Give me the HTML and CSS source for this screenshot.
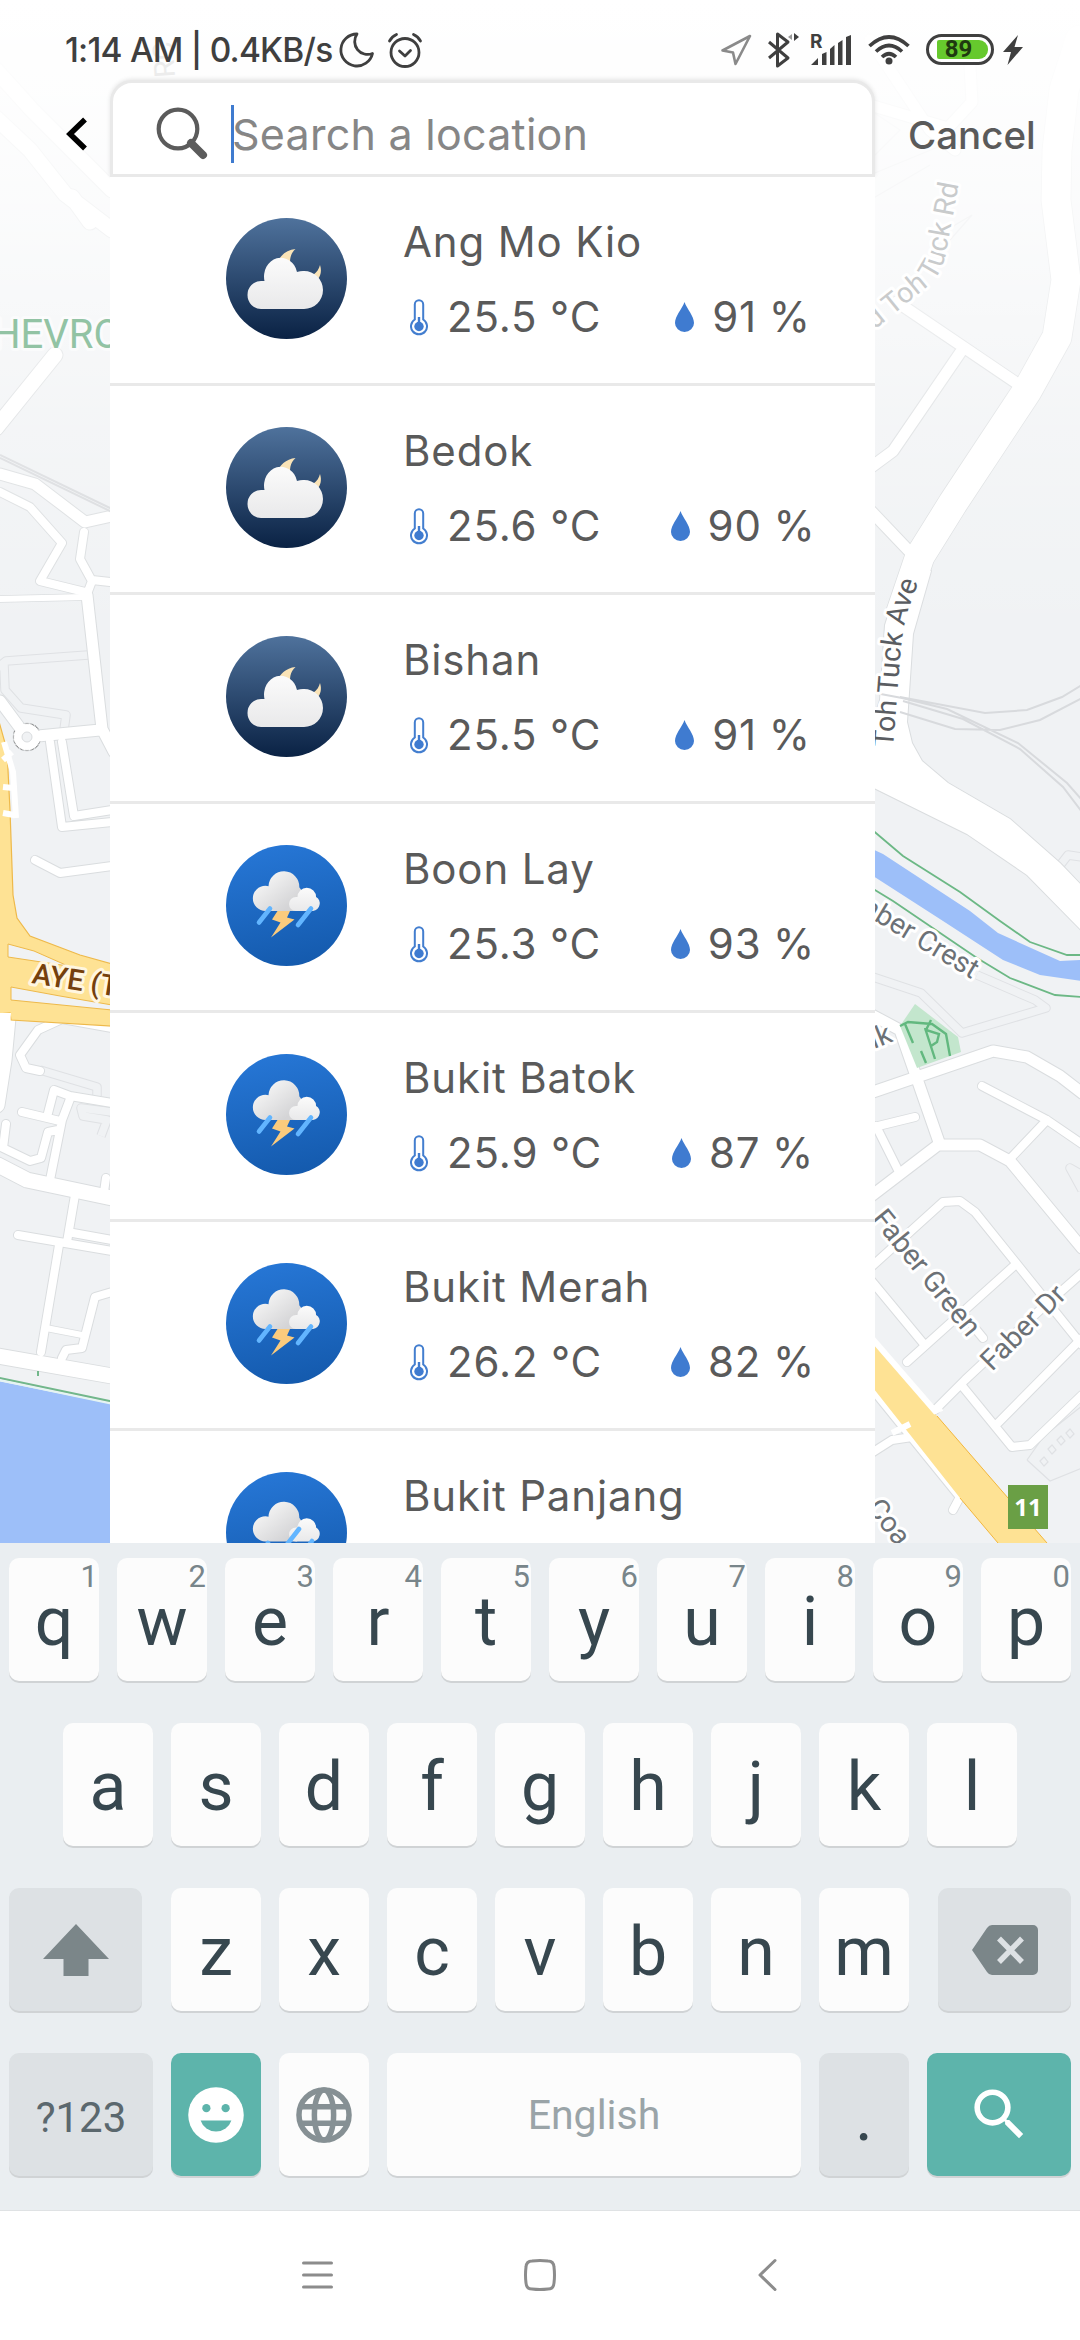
FILE: index.html
```html
<!DOCTYPE html>
<html lang="en">
<head>
<meta charset="utf-8">
<title>Search a location</title>
<link rel="stylesheet" href="styles.css">
</head>
<body>
<svg class="defs" width="0" height="0" aria-hidden="true">
  <defs>
    <linearGradient id="night" x1="0" y1="0" x2="0" y2="1"><stop offset="0" stop-color="#4f729c"/><stop offset="1" stop-color="#0a2244"/></linearGradient>
    <linearGradient id="day" x1="0.4" y1="0" x2="0.6" y2="1"><stop offset="0" stop-color="#2676d5"/><stop offset="1" stop-color="#145aad"/></linearGradient>
    <linearGradient id="cloud" x1="0" y1="0" x2="0" y2="1"><stop offset="0" stop-color="#fbfbfb"/><stop offset="1" stop-color="#e9e9ea"/></linearGradient>
    <linearGradient id="cloudDark" x1="0" y1="0" x2="1" y2="1"><stop offset="0.2" stop-color="#f4f4f4"/><stop offset="0.8" stop-color="#d4d4d6"/></linearGradient>
    <symbol id="w-night" viewBox="0 0 121 121">
      <circle cx="60.500" cy="60.500" r="60.500" fill="url(#night)"/>
      <path d="M51 47C53 38 60 32 69.500 31C64 36 63 43 65 50ZM87 57C91 54 93 51 94 47C96 53 94.500 58 92 61Z" fill="#f9e3b7"/>
      <path d="M35 91a13.500 14 0 0 1 0-28h3.500a16.500 18.500 0 0 1 32.500-9a19 19 0 0 1 7-1a19 19 0 0 1 0 38Z" fill="url(#cloud)"/>
    </symbol>
    <g id="clouds">
      <path d="M39.500 66a12.500 12.500 0 0 1 0-25.300q1.700 0 3 .5a15.400 15.400 0 0 1 30.800 1q5 6 4 12L71 66Z" fill="url(#cloudDark)"/>
      <path d="M70 66a7 7 0 0 1 0-14h1.500a9.300 9.300 0 0 1 18.600 0a7.600 7.600 0 0 1-3.100 14Z" fill="url(#cloud)"/>
    </g>
    <symbol id="w-storm" viewBox="0 0 121 121">
      <circle cx="60.500" cy="60.500" r="60.500" fill="url(#day)"/>
      <use href="#clouds"/>
      <path d="M44 63.500L33 77.500M85 63.500L72 80" stroke="#62b5ff" stroke-width="4.600" stroke-linecap="round"/>
      <path d="M51.500 66H64L61 72.500L68.500 74.500L45 92.500L54.500 77.500L46 74.500Z" fill="#fbcb7d"/>
    </symbol>
    <symbol id="w-rain" viewBox="0 0 121 121">
      <circle cx="60.500" cy="60.500" r="60.500" fill="url(#day)"/>
      <use href="#clouds" y="3.500"/>
      <path d="M73 57L59 75M86 69L75 84M42 71L32 85" stroke="#62b5ff" stroke-width="4.600" stroke-linecap="round"/>
    </symbol>
    <symbol id="thermo" viewBox="0 0 18 37">
      <path d="M4.800 20.500V5.500a4.200 4.200 0 0 1 8.400 0V20.500a8 8 0 1 1-8.400 0Z" fill="none" stroke="#437ecf" stroke-width="2"/>
      <path d="M9 18v9" stroke="#3f7bd0" stroke-width="2.400"/><circle cx="9" cy="27.500" r="4.700" fill="#3f7bd0"/>
    </symbol>
    <symbol id="drop" viewBox="0 0 19 30"><path d="M9.500 0C12 7 19 14 19 21a9.500 9 0 0 1-19 0C0 14 7 7 9.500 0Z" fill="#3f7bd0"/></symbol>
  </defs>
</svg>

<main class="screen">
  <svg class="map" viewBox="0 0 1080 1543" width="1080" height="1543">
    <defs>
      <linearGradient id="fade" x1="0" y1="0" x2="0" y2="1"><stop offset="0" stop-color="#fff"/><stop offset="0.15" stop-color="#fff" stop-opacity="0.9"/><stop offset="0.35" stop-color="#fff" stop-opacity="0.7"/><stop offset="0.65" stop-color="#fff" stop-opacity="0.28"/><stop offset="1" stop-color="#fff" stop-opacity="0"/></linearGradient>
      <g id="w6" fill="none"><path d="M0 599L85 597M46 1328L82 1335"/></g>
      <g id="w8" fill="none">
        <path d="M0 492L30 507L62 543L40 581L85 592M92 580L110 582M84 532L80 559L92 581L87 594"/>
        <path d="M50 742L62 827L112 822M62 742L74 816L112 810M35 860L60 873L112 866"/>
        <path d="M112 1028L62 1019L38 1030L20 1055L26 1068L40 1071M22 1112L60 1121M112 1103L70 1096L54 1090L47 1117M70 1099L62 1120L50 1180M6 1124L3 1148L30 1161L41 1158L48 1132L58 1130"/>
        <path d="M75 1195L67 1242M18 1235L112 1251M73 1233L112 1240M59 1245L41 1352M112 1292L95 1297L82 1348L66 1350L62 1358M106 1178L104 1192"/>
        <path d="M982 1086L1047 1120L1082 1144M870 1128L915 1117M876 1126L899 1172M1047 1120L1008 1161M870 1268L943 1202L960 1201L975 1212L1082 1345M1015 1265L907 1362M870 1279L923 1343M1082 1273L1040 1310L965 1380L935 1410M963 1387L1012 1447L1030 1445L1082 1395M998 1423L1082 1338M983 1338L960 1310"/>
        <path d="M870 1386L960 1497L953 1510M870 1454L892 1440L912 1437"/>
      </g>
      <g id="w11" fill="none">
        <path d="M87 595L102 729L114 752M0 701L20 728M38 736L100 730M0 474L35 484L85 522L112 516"/>
        <path d="M897 302L1018 384M960 353L893 451L870 468M870 510L910 552"/>
        <path d="M870 1093L993 1051L1027 1057L1060 1076L1082 1093M870 1014L900 1030L940 1145M870 1197L938 1145L980 1145L1010 1161L1082 1248"/>
        <path d="M870 105L948 128L972 102L970 66M870 40L930 130L955 150"/>
      </g>
      <g id="w15" fill="none">
        <path d="M55 355L-4 428M-2 1165L27 1180L112 1198M-2 1356L112 1376M8 1018L4 1060L-3 1105"/>
        <path d="M-4 118L30 150L65 194L112 230M-4 70L32 110L112 190M72 197L90 222"/>
      </g>
      <path id="expr" d="M906 560L885 625L880 700L870 730V786L967 834L1027 875L1084 933V888L1060 863L1010 819L948 783L922 761L912 743L907 722L913 634L931 571Z"/>
      <path id="avenue" d="M1080 40L1064 90L1057 150L1056 200L1066 280L1057 337L1027 391L953 503L920 556L901 612" fill="none"/>
      <path id="tohRd" d="M851 343L879 326L933 282Q944 268 947 248L965 150"/>
      <path id="tohAve" d="M893 748L900 660Q902 630 909 608L930 550"/>
    </defs>
    <rect width="1080" height="1543" fill="#f0f2f4"/>
    <g fill="none" stroke="#dfe1e4" stroke-width="9.500" stroke-linejoin="round"><path d="M-3 668L6 661L88 655M4 665L5 690L21 708L66 715L64 730M40 1070L97 1087L97 1096M112 1112L81 1108L83 1116L107 1120L101 1136M870 976L921 993L962 1033L1046 1008L1035 1000L977 975M1082 857L1068 855L1058 868M1082 1175L1070 1168L1082 1190"/></g>
    <g fill="none" stroke="#f0f2f4" stroke-width="7.500" stroke-linejoin="round"><path d="M-3 668L6 661L88 655M4 665L5 690L21 708L66 715L64 730M40 1070L97 1087L97 1096M112 1112L81 1108L83 1116L107 1120L101 1136M870 976L921 993L962 1033L1046 1008L1035 1000L977 975M1082 857L1068 855L1058 868M1082 1175L1070 1168L1082 1190"/></g>
    <g fill="none" stroke="#dfe1e4" stroke-width="1.200"><path d="M1027 1460L1044 1436L1082 1406M1027 1460L1050 1481L1082 1468M1040 1461l4-4l4 5l-4 4ZM1048 1449l4-4l4 5l-4 4ZM1057 1440l4-4l4 5l-4 4ZM1066 1433l4-4l4 5l-4 4ZM870 175L955 140M870 200L930 165M870 110L900 130L870 160M940 240L955 225L972 215L950 240"/></g>
    <g stroke="#dadddf" stroke-linecap="round" stroke-linejoin="round">
      <use href="#w6" stroke-width="7.500"/><use href="#w8" stroke-width="10"/><use href="#w11" stroke-width="13"/><use href="#w15" stroke-width="17"/>
      <use href="#avenue" stroke-width="30.500"/><use href="#expr" stroke-width="2"/><circle cx="27" cy="737" r="14"/>
    </g>
    <g stroke="#fff" stroke-linecap="round" stroke-linejoin="round">
      <use href="#w6" stroke-width="6"/><use href="#w8" stroke-width="8"/><use href="#w11" stroke-width="11"/><use href="#w15" stroke-width="15"/>
      <use href="#avenue" stroke-width="29"/><use href="#expr" fill="#fff" stroke="none"/><circle cx="27" cy="737" r="13" fill="#fff"/>
    </g>
    <circle cx="27" cy="737" r="5" fill="#f0f2f4" stroke="#dadddf"/>
    <g fill="none" stroke="#d8dadd" stroke-width="2"><path d="M900 697L985 713L1027 710L1062 697L1082 685M900 712L955 729L1000 730L1040 720L1082 698M902 698L947 709L1018 743L1067 783L1082 800M903 701L963 719L1020 749L1063 787L1082 812M870 692L902 698M0 455L112 509M0 458L112 512"/></g>
    <path d="M-2 718L7 750L10 810L13 895L17 918L30 936L80 955L112 964V1026L11 1020L10 1013L-2 1014Z" fill="#fee294" stroke="#eeb94a" stroke-width="1.200"/>
    <path d="M8 944L34 951L68 966L8 957ZM11 987L60 996L112 1005V1010L11 1000Z" fill="#f0f2f4" stroke="#eeb94a"/>
    <path d="M4 742L13 772L16 818M3 760L12 752M3 787L13 788M3 813L14 815" fill="none" stroke="#fff" stroke-width="6"/>
    <path d="M-2 1013L11 1013L9 1040L-2 1040Z" fill="#fff"/>
    <path d="M870 848L883 854L970 911L998 933L1060 961L1082 960V981L1040 975L1003 960L943 921L870 874Z" fill="#9dbff9"/>
    <path d="M870 828L903 856L960 892L1000 921L1030 942L1067 955L1082 955M870 887L893 901L977 958L1010 978L1055 995L1082 997" fill="none" stroke="#6cb885" stroke-width="1.800"/>
    <path d="M915 1004L958 1037L961 1052L917 1068L900 1026Z" fill="#c3e6cd"/>
    <path d="M900 1026L908 1022L932 1024L946 1034L950 1056M905 1024L913 1043M925 1028L935 1059M931 1020L926 1030L939 1034L937 1042L931 1046M921 1051L926 1063" fill="none" stroke="#62b87f" stroke-width="2.400"/>
    <path d="M870 1338L937 1416L1047 1543H998L960 1498L870 1384Z" fill="#fee294"/>
    <path d="M937 1416L1047 1543M998 1543L960 1498" stroke="#f2b63c"/>
    <path d="M870 1336L935 1411L942 1408M892 1433L910 1424" fill="none" stroke="#fff" stroke-width="6"/>
    <path d="M-2 1381L112 1404V1543H-2Z" fill="#9dbff9"/><path d="M-2 1377.500L112 1401.500M38 1371V1376" stroke="#72b78b" stroke-width="2"/><path d="M-2 1380L112 1404" stroke="#e4f4f2" stroke-width="1.600"/>
    <rect width="1080" height="640" fill="url(#fade)"/>
    <g class="road-label">
      <text class="faint-label"><textPath href="#tohRd">Old Toh Tuck Rd</textPath></text>
      <text class="dark-label"><textPath href="#tohAve">Toh Tuck Ave</textPath></text>
      <text transform="translate(860 912) rotate(31)">aber Crest</text>
      <text transform="translate(874 1049) rotate(-22)">lk</text>
      <text transform="translate(871 1219) rotate(51)">Faber Green</text>
      <text transform="translate(992 1372) rotate(-45)">Faber Dr</text>
      <text transform="translate(866 1508) rotate(52)">Coa</text>
      <text class="highway-label" transform="translate(31 983) rotate(9)">AYE (T</text>
      <text class="place-label" x="-8" y="348">HEVRO</text>
      <text class="ghost-label" transform="translate(175 77) rotate(-94)">RC</text>
    </g>
    <rect x="1008" y="1485" width="40" height="44" fill="#6a9f45"/>
    <text class="exit-label" x="1028" y="1516" text-anchor="middle">11</text>
  </svg>

  <header class="status">
    <span class="clock">1:14 AM | 0.4KB/s</span>
    <svg class="moon" width="34" height="36" viewBox="0 0 34 36"><path d="M17 2A16 16 0 1 0 32.500 21.500A13 13 0 0 1 17 2Z" fill="none" stroke="#3f3f3f" stroke-width="2.800" stroke-linejoin="round"/></svg>
    <svg class="alarm" width="34" height="36" viewBox="0 0 34 36" fill="none" stroke="#3f3f3f" stroke-width="2.800" stroke-linecap="round" stroke-linejoin="round"><circle cx="17" cy="20.500" r="14"/><path d="M11.500 19L17 24L22.500 18.500M1.500 9Q4 4.500 8.500 2.500M32.500 9Q30 4.500 25.500 2.500"/></svg>
    <span class="spring"></span>
    <svg width="31" height="32" viewBox="0 0 31 32"><path d="M29 2L14.500 30L12 18.500L1.500 16.500Z" fill="none" stroke="#8a8a8a" stroke-width="2.600" stroke-linejoin="round"/></svg>
    <svg class="bt" width="31" height="36" viewBox="0 0 31 36"><path d="M1 10L20 26L9.500 34V2L20 10L1 26" fill="none" stroke="#3f3f3f" stroke-width="3" stroke-linejoin="round"/><path d="M26 1V9L31 5Z" fill="#3f3f3f"/><path d="M24 2V8L20 5Z" fill="#999"/></svg>
    <svg class="signal" width="42" height="32" viewBox="0 0 42 32"><path d="M1 31L8 24V31ZM12 20L16.500 18V31H12ZM20 15L24.500 11V31H20ZM28 9L32.500 6V31H28ZM36 3L41 1V31H36Z" fill="#3f3f3f"/><text x="0" y="14" class="roam">R</text></svg>
    <svg class="wifi" width="42" height="30" viewBox="0 0 42 30"><path d="M1.500 11Q21-7 40.500 11M8 16.500Q21 4.500 34 16.500M14 22Q21 15.500 28 22" fill="none" stroke="#3f3f3f" stroke-width="3.700"/><circle cx="21" cy="26" r="3.500" fill="#3f3f3f"/></svg>
    <span class="battery"><span class="charge">89</span></span>
    <svg width="20" height="30" viewBox="0 0 20 30"><path d="M15 0L0 17H8L4.500 30L20 12H11.500Z" fill="#3f3f3f"/></svg>
  </header>

  <section class="topbar">
    <svg class="back" width="22" height="34" viewBox="0 0 22 34"><path d="M19 2.500L4 17L19 31.500" fill="none" stroke="#000" stroke-width="5.500"/></svg>
    <div class="searchbox">
      <svg width="52" height="54" viewBox="0 0 52 54"><circle cx="22" cy="22" r="19.300" fill="none" stroke="#5b5b5b" stroke-width="4.200"/><path d="M35 36L47 48" stroke="#5b5b5b" stroke-width="8" stroke-linecap="round"/></svg>
      <span class="caret"></span><span class="placeholder">Search a location</span>
    </div>
    <span class="cancel">Cancel</span>
  </section>

  <ul class="results">
    <li class="row"><svg class="weather"><use href="#w-night"/></svg><div class="info"><div class="name">Ang Mo Kio</div><div class="meta"><span class="temp"><svg class="thermo"><use href="#thermo"/></svg>25.5 °C</span><span class="hum"><svg class="drop"><use href="#drop"/></svg>91 %</span></div></div></li>
    <li class="row"><svg class="weather"><use href="#w-night"/></svg><div class="info"><div class="name">Bedok</div><div class="meta"><span class="temp"><svg class="thermo"><use href="#thermo"/></svg>25.6 °C</span><span class="hum"><svg class="drop"><use href="#drop"/></svg>90 %</span></div></div></li>
    <li class="row"><svg class="weather"><use href="#w-night"/></svg><div class="info"><div class="name">Bishan</div><div class="meta"><span class="temp"><svg class="thermo"><use href="#thermo"/></svg>25.5 °C</span><span class="hum"><svg class="drop"><use href="#drop"/></svg>91 %</span></div></div></li>
    <li class="row"><svg class="weather"><use href="#w-storm"/></svg><div class="info"><div class="name">Boon Lay</div><div class="meta"><span class="temp"><svg class="thermo"><use href="#thermo"/></svg>25.3 °C</span><span class="hum"><svg class="drop"><use href="#drop"/></svg>93 %</span></div></div></li>
    <li class="row"><svg class="weather"><use href="#w-storm"/></svg><div class="info"><div class="name">Bukit Batok</div><div class="meta"><span class="temp"><svg class="thermo"><use href="#thermo"/></svg>25.9 °C</span><span class="hum"><svg class="drop"><use href="#drop"/></svg>87 %</span></div></div></li>
    <li class="row"><svg class="weather"><use href="#w-storm"/></svg><div class="info"><div class="name">Bukit Merah</div><div class="meta"><span class="temp"><svg class="thermo"><use href="#thermo"/></svg>26.2 °C</span><span class="hum"><svg class="drop"><use href="#drop"/></svg>82 %</span></div></div></li>
    <li class="row"><svg class="weather"><use href="#w-rain"/></svg><div class="info"><div class="name">Bukit Panjang</div></div></li>
  </ul>

  <section class="keyboard">
    <div class="keys">
      <span class="key">q<sup>1</sup></span><span class="key">w<sup>2</sup></span><span class="key">e<sup>3</sup></span><span class="key">r<sup>4</sup></span><span class="key">t<sup>5</sup></span><span class="key">y<sup>6</sup></span><span class="key">u<sup>7</sup></span><span class="key">i<sup>8</sup></span><span class="key">o<sup>9</sup></span><span class="key">p<sup>0</sup></span>
    </div>
    <div class="keys">
      <span class="key">a</span><span class="key">s</span><span class="key">d</span><span class="key">f</span><span class="key">g</span><span class="key">h</span><span class="key">j</span><span class="key">k</span><span class="key">l</span>
    </div>
    <div class="keys">
      <span class="key func shift"><svg width="66" height="52" viewBox="0 0 66 52"><path d="M33 0L66 35H45.500V52H20.500V35H0Z" fill="#7b8689"/></svg></span>
      <span class="key">z</span><span class="key">x</span><span class="key">c</span><span class="key">v</span><span class="key">b</span><span class="key">n</span><span class="key">m</span>
      <span class="key func erase"><svg width="66" height="50" viewBox="0 0 66 50"><path d="M20 0H61a5 5 0 0 1 5 5V45a5 5 0 0 1-5 5H20q-3 0-5-3L0 25L15 3Q17 0 20 0Z" fill="#7b8689"/><path d="M27 13.500L50 37M50 13.500L27 37" stroke="#dde1e4" stroke-width="5.500"/></svg></span>
    </div>
    <div class="keys">
      <span class="key func symbols">?123</span>
      <span class="key accent"><svg width="66" height="66" viewBox="0 0 24 24"><circle cx="12" cy="12" r="10.100" fill="#fff"/><circle cx="8.500" cy="9.500" r="1.500" fill="#5db4ab"/><circle cx="15.500" cy="9.500" r="1.500" fill="#5db4ab"/><path d="M6.400 14H17.600A5.900 5.900 0 0 1 6.400 14Z" fill="#5db4ab"/></svg></span>
      <span class="key"><svg width="66" height="66" viewBox="0 0 24 24" fill="none" stroke="#869094" stroke-width="2"><circle cx="12" cy="12" r="9.100"/><ellipse cx="12" cy="12" rx="3.500" ry="9.100"/><path d="M3.400 9H20.600M3.400 15H20.600"/></svg></span>
      <span class="key space">English</span>
      <span class="key func">.</span>
      <span class="key accent go"><svg width="67" height="67" viewBox="0 0 24 24"><path d="M15.500 14h-.79l-.28-.27A6.471 6.471 0 0 0 16 9.500 6.500 6.500 0 1 0 9.500 16c1.610 0 3.090-.59 4.230-1.570l.27.28v.79l5 4.990L20.490 19l-4.990-5zm-6 0C7.010 14 5 11.990 5 9.500S7.010 5 9.500 5 14 7.010 14 9.500 11.990 14 9.500 14z" fill="#fff"/></svg></span>
    </div>
  </section>

  <nav class="navbar">
    <svg width="32" height="34" viewBox="0 0 32 34"><path d="M4.500 5H32.500M4.500 17H32.500M4.500 29H32.500" stroke="#8c8c8c" stroke-width="3" stroke-linecap="round"/></svg>
    <svg width="32" height="34" viewBox="0 0 32 34"><path d="M8 3Q16 2 24 3Q29.500 3 30 9Q31 17 30 25Q29.500 31 24 31Q16 32 8 31Q2.500 31 2 25Q1 17 2 9Q2.500 3 8 3Z" fill="none" stroke="#8c8c8c" stroke-width="3"/></svg>
    <svg width="32" height="34" viewBox="0 0 32 34"><path d="M26 2.500L11 17L26 31.500" fill="none" stroke="#8c8c8c" stroke-width="3" stroke-linecap="round" stroke-linejoin="round"/></svg>
  </nav>
</main>
</body>
</html>
```
FILE: styles.css
```css
* { box-sizing: border-box; }
body { margin: 0; background: #fff; font-family: Inter, "Liberation Sans", sans-serif; color: #5a5a5a; }
svg { display: block; flex: none; overflow: visible; }
.defs { position: absolute; }
.screen { position: relative; width: 1080px; height: 2340px; overflow: hidden; display: flex; flex-direction: column; }
.map { position: absolute; left: 0; top: 0; z-index: 0; overflow: hidden; }
.status, .topbar, .results, .keyboard, .navbar { position: relative; z-index: 1; flex: none; }

.road-label { font: 400 28.500px Roboto, sans-serif; fill: #6c7176; stroke: #fff; stroke-width: 6px; stroke-linejoin: round; paint-order: stroke; }
.road-label text { paint-order: stroke; }
.faint-label { fill: #c9cbcc; }
.dark-label { fill: #5a5d62; }
.highway-label { fill: #75400c; stroke: #fff6e0; font-size: 29px; font-weight: 500; }
.place-label { fill: #92c3a4; font-size: 40px; stroke-opacity: 0.5; }
.ghost-label { fill: #ececec; stroke: none; }
.exit-label { font: 700 24px "Open Sans", sans-serif; fill: #fff; }

.status { height: 80px; display: flex; align-items: center; padding: 19px 57px 0 65px; color: #3f3f3f; }
.clock { font: 500 33.500px/40px Inter, sans-serif; letter-spacing: -0.8px; width: 275px; white-space: nowrap; }
.alarm { margin-left: 14px; }
.spring { flex: 1; }
.bt { margin-left: 16px; }
.signal { margin-left: 11px; }
.roam { font: 700 19px Inter, sans-serif; fill: #3f3f3f; }
.wifi { margin-left: 16px; }
.battery { width: 68px; height: 31px; margin: 0 9px 0 16px; padding: 3px; border: 3px solid #3f3f3f; border-radius: 16px; display: flex; justify-content: flex-end; }
.charge { width: 51px; height: 19px; border-radius: 2px 9px 9px 2px; background: #66c92d; color: #1f3a10; font: 700 24px/19px Roboto, sans-serif; padding-right: 8px; text-align: center; }

.topbar { height: 97px; display: flex; align-items: center; }
.back { margin: 10px 22px 0 66px; }
.searchbox { width: 765px; height: 97px; border: 3px solid #e9e9e9; border-radius: 22px 22px 0 0; background: #fff; display: flex; align-items: center; padding: 11px 0 0 43px; box-shadow: 0 -1px 4px rgba(0, 0, 0, 0.1); }
.caret { width: 3px; height: 58px; margin: 0 -2px 0 23px; background: #3f7bcf; }
.placeholder { font-size: 43px; line-height: 58px; color: #868686; letter-spacing: 0.25px; white-space: nowrap; }
.cancel { font-size: 38.500px; font-weight: 500; margin: 13px 0 0 33px; }

.results { list-style: none; margin: 0 0 0 110px; padding: 0; width: 765px; height: 1366px; overflow: hidden; background: #fff; }
.row { height: 209px; border-bottom: 3px solid #e9e9e9; display: flex; align-items: flex-start; padding: 40px 0 0 116px; }
.weather { width: 121px; height: 121px; margin: 1px 56px 0 0; }
.info { flex: 1; font-size: 42px; line-height: 50px; letter-spacing: 0.85px; white-space: nowrap; }
.name { margin-bottom: 25px; }
.meta { display: flex; }
.temp { width: 211px; padding-left: 7px; display: flex; align-items: center; gap: 19px; }
.hum { width: 258px; display: flex; align-items: center; justify-content: center; gap: 18px; word-spacing: -1px; }
.thermo { width: 18px; height: 37px; }
.drop { width: 19px; height: 30px; }

.keyboard { height: 668px; background: #eaeef1; border-bottom: 1px solid #dfe2e4; padding-top: 15px; display: flex; flex-direction: column; gap: 42px; font-family: Roboto, sans-serif; }
.keys { display: flex; justify-content: center; gap: 18px; }
.key { position: relative; flex: none; width: 90px; height: 123px; border-radius: 10px; background: #fcfcfc; box-shadow: 0 2px 0 #d0d3d5; color: #37474f; font-size: 68px; line-height: 123px; display: flex; align-items: center; justify-content: center; }
.key:not(:has(svg)) { padding-top: 5px; }
.key sup { position: absolute; top: 0; right: 1px; font-size: 31px; line-height: 38px; color: #78858a; }
.func { background: #dde1e4; }
.shift { width: 133px; margin-right: 11px; }
.erase { width: 133px; margin-left: 11px; }
.symbols { width: 144px; font-size: 42px; color: #5b686e; }
.key.space { width: 414px; font-size: 41px; padding-top: 1px; color: #9aa4a8; }
.accent { background: #5db4ab; }
.go { width: 144px; }

.navbar { height: 129px; background: #fff; display: flex; justify-content: center; gap: 193px; padding-top: 47px; }
```
